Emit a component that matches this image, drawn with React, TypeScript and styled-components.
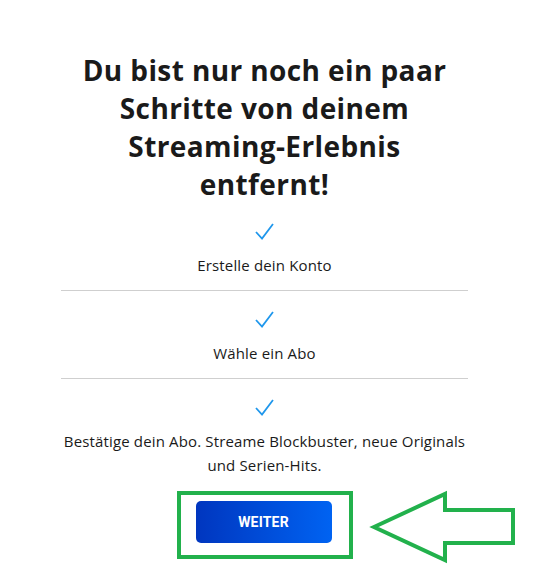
import React from 'react';
import styled, { createGlobalStyle } from 'styled-components';

const GlobalStyle = createGlobalStyle`
  html, body {
    margin: 0;
    padding: 0;
    background: #ffffff;
  }
  body {
    font-family: "Open Sans", Lato, Arial, sans-serif;
    color: #1a1a1a;
  }
`;

const Page = styled.main`
  width: 536px;
  min-height: 576px;
  box-sizing: border-box;
  padding: 51px 7px 0 0;
  display: flex;
  flex-direction: column;
  align-items: center;
`;

const Title = styled.h1`
  margin: 0;
  font-size: 28px;
  line-height: 38px;
  font-weight: 700;
  letter-spacing: 0.4px;
  text-align: center;
  white-space: nowrap;
  color: #1a1a1a;
`;

const Steps = styled.ol`
  list-style: none;
  margin: 0;
  padding: 0;
  width: 407px;
`;

const Step = styled.li<{ $last?: boolean }>`
  display: flex;
  flex-direction: column;
  align-items: center;
  gap: 13px;
  padding: ${({ $last }) => ($last ? '20px 0 0' : '20px 0 13px')};
  border-bottom: ${({ $last }) => ($last ? 'none' : '1px solid #cfcfcf')};
`;

const StepText = styled.p`
  margin: 0;
  font-size: 15px;
  line-height: 24px;
  letter-spacing: 0.15px;
  text-align: center;
  white-space: nowrap;
  color: #1a1a1a;
`;

const Highlight = styled.div`
  position: relative;
  margin-top: 14px;
  border: 4px solid #22b14c;
  padding: 6px 17px 12px 15px;
`;

const Arrow = styled.svg`
  position: absolute;
  left: 187px;
  top: -7px;
`;

const Button = styled.button`
  display: block;
  width: 136px;
  height: 42px;
  border: none;
  border-radius: 5px;
  background: linear-gradient(90deg, #0036bf 0%, #0063f2 100%);
  color: #ffffff;
  font-family: Roboto, Arial, sans-serif;
  font-size: 14px;
  font-weight: 700;
  letter-spacing: 0.2px;
  cursor: pointer;
`;

const Check = () => (
  <svg width="19" height="17" viewBox="0 0 19 17" fill="none">
    <path d="M1 9 L7 15.5 L18 1" stroke="#1f97ec" strokeWidth="1.8" />
  </svg>
);

const titleLines = ['Du bist nur noch ein paar', 'Schritte von deinem', 'Streaming-Erlebnis', 'entfernt!'];

const steps = [
  ['Erstelle dein Konto'],
  ['Wähle ein Abo'],
  ['Bestätige dein Abo. Streame Blockbuster, neue Originals', 'und Serien-Hits.'],
];

const withBreaks = (lines: string[]) =>
  lines.map((l, j) => (
    <React.Fragment key={j}>
      {j > 0 && <br />}
      {l}
    </React.Fragment>
  ));

const App: React.FC = () => {
  return (
    <>
      <GlobalStyle />
      <Page>
        <Title>{withBreaks(titleLines)}</Title>
        <Steps>
          {steps.map((lines, i) => (
            <Step key={i} $last={i === steps.length - 1}>
              <Check />
              <StepText>{withBreaks(lines)}</StepText>
            </Step>
          ))}
        </Steps>
        <Highlight>
          <Button>WEITER</Button>
          <Arrow width="150" height="80" viewBox="0 0 150 80" fill="none">
            <polygon
              points="6,39 77,6 77,22 145,22 145,55 77,55 77,72"
              stroke="#22b14c"
              strokeWidth="4"
              strokeLinejoin="miter"
            />
          </Arrow>
        </Highlight>
      </Page>
    </>
  );
};

export default App;
